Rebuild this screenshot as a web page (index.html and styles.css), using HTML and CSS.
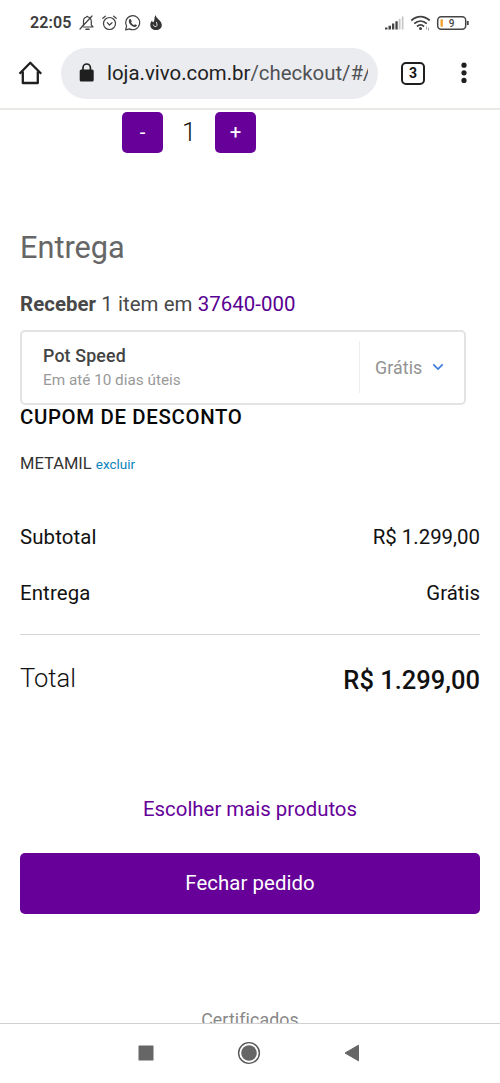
FILE: index.html
```html
<!DOCTYPE html>
<html lang="pt-BR">
<head>
<meta charset="utf-8">
<title>Checkout</title>
<link rel="stylesheet" href="styles.css">
</head>
<body>
<header class="status">
  <span class="clock">22:05</span>
  <svg class="status-left" width="86" height="20" viewBox="0 0 86 20" fill="none" stroke="#404040" stroke-width="1.200" stroke-linecap="round" stroke-linejoin="round">
    <path d="M4 13.500 L5.500 12 V8.500 C5.500 6 6.500 4.300 8.500 4 Q9.300 2.500 10 4 C12.500 4.500 13.300 6 13.300 8.500 V12 L15 14 H5.500 M14 3 L2 16"/>
    <path d="M8 16.300 H11" stroke-width="1.600"/>
    <circle cx="31.500" cy="10.500" r="6"/>
    <path d="M29.300 9.700 L31.500 12 L34 9.700 M24.800 5.300 L27.300 3.200 M38.200 5.300 L35.700 3.200"/>
    <path d="M47.600 16.800 L48.600 13.200 A7 7 0 1 1 51.400 15.900 Z"/>
    <path d="M51.500 6.300 L52.700 6 L53.800 8.400 L53 9.300 Q54 11.300 56 12.200 L57 11.200 L59 12.300 Q58.500 14 56.800 13.900 C53.500 13.600 50.700 10.600 50.800 8 Q50.900 6.800 51.500 6.300Z" fill="#404040" stroke="none"/>
    <path d="M77.500 2 C78 5.500 83.800 7.500 83.800 12 C83.800 15.500 81.300 17 78 17 C74.700 17 72.300 15 72.300 12 C72.300 9.500 73.200 8.500 74.200 7.500 C74.200 8.700 74.500 9.200 75.300 9.200 C77 8 76 4.500 77.500 2Z" fill="#333" stroke="none"/>
    <path d="M78.500 9.500 C78.800 11.500 79.700 12.300 78.300 13.400 C76.800 14 75.500 13 75.300 12" stroke="#fff" stroke-width=".9"/>
  </svg>
  <svg class="status-right" width="88" height="20" viewBox="0 0 88 20">
    <path d="M1 14.500 H3.500 V16.500 H1Z M4.500 12.700 H7 V16.500 H4.500Z M8 10.500 H10.300 V16.500 H8Z M11.400 8.300 H13.700 V16.500 H11.400Z" fill="#454545"/>
    <path d="M14.700 5.800 H16.500 V16.500 H14.700Z M17.800 3.500 H19.500 V16.500 H17.800Z" fill="#c6c6c6"/>
    <g fill="none" stroke="#404040" stroke-width="1.800"><path d="M27.300 7.500 C33 2.500 40 2.500 45.700 7.500 M30.200 10.700 C34 7.300 39 7.300 42.800 10.700 M33 13.500 C35.200 11.500 37.800 11.500 40 13.500"/></g>
    <circle cx="36.500" cy="15.500" r="1.500" fill="#404040"/>
    <path d="M42.500 13.500 V16.500 M44.500 14.500 V17.500" stroke="#aaa"/>
    <rect x="53.700" y="3.700" width="28" height="12.600" rx="3.500" fill="none" stroke="#444" stroke-width="1.500"/>
    <rect x="56.500" y="6.200" width="2.400" height="7.600" rx=".5" fill="#f0a233"/>
    <path d="M83.800 8 V12" stroke="#444" stroke-width="1.800"/>
    <text x="67.500" y="13.700" text-anchor="middle" class="battery-text">9</text>
  </svg>
</header>
<div class="toolbar">
  <svg class="home" width="26" height="26" viewBox="0 0 26 26" fill="none" stroke="#1f1f1f" stroke-width="2.300" stroke-linejoin="round"><path d="M1.500 13.800 L12.300 2.800 L23.200 13.800 M4.800 11.500 V23 H19.800 V11.500"/></svg>
  <div class="address">
    <svg width="16" height="20" viewBox="0 0 16 20"><rect x=".7" y="6.500" width="14" height="12" rx="1.500" fill="#1f1f1f"/><path d="M4 7.500 V4.700 A3.700 3.700 0 0 1 11.400 4.700 V7.500" fill="none" stroke="#1f1f1f" stroke-width="1.700"/></svg>
    <div class="url">loja.vivo.com.br<span class="path">/checkout/#/</span></div>
  </div>
  <div class="tabs">3</div>
  <svg class="more" width="6" height="22" viewBox="0 0 6 22" fill="#1f1f1f"><circle cx="3" cy="3.200" r="2.600"/><circle cx="3" cy="10.800" r="2.600"/><circle cx="3" cy="18.400" r="2.600"/></svg>
</div>
<main class="page">
  <div class="quantity"><button class="step">-</button><span class="amount">1</span><button class="step">+</button></div>
  <h2 class="heading">Entrega</h2>
  <p class="receive"><b>Receber</b> 1 item em <a>37640-000</a></p>
  <section class="shipping">
    <div class="carrier"><div class="carrier-name">Pot Speed</div><div class="carrier-time">Em até 10 dias úteis</div></div>
    <div class="price"><span>Grátis</span><svg width="12" height="8" viewBox="0 0 12 8" fill="none" stroke="#3b7ddd" stroke-width="1.700"><path d="M1.300 1.300 L6 6 L10.700 1.300"/></svg></div>
  </section>
  <h3 class="coupon-title">CUPOM DE DESCONTO</h3>
  <p class="coupon">METAMIL <a>excluir</a></p>
  <div class="row"><span class="label">Subtotal</span><span>R$ 1.299,00</span></div>
  <div class="row"><span class="label">Entrega</span><span>Grátis</span></div>
  <div class="total"><span class="total-label">Total</span><strong>R$ 1.299,00</strong></div>
  <a class="more-products">Escolher mais produtos</a>
  <button class="submit">Fechar pedido</button>
  <p class="certs">Certificados</p>
</main>
<nav class="system-nav">
  <svg width="16" height="16" viewBox="0 0 16 16"><rect x=".5" y=".5" width="15" height="15" rx=".5" fill="#666"/></svg>
  <svg width="24" height="24" viewBox="0 0 24 24"><circle cx="12" cy="12" r="10.400" fill="none" stroke="#555" stroke-width="1.400"/><circle cx="12" cy="12" r="7.800" fill="#666"/></svg>
  <svg width="16" height="18" viewBox="0 0 16 18"><path d="M1 9 L14.500 1.200 V16.800Z" fill="#666" stroke="#666" stroke-linejoin="round"/></svg>
</nav>
</body>
</html>
```
FILE: styles.css
```css
* { box-sizing: border-box; }
body { margin: 0; width: 500px; height: 1083px; display: flex; flex-direction: column; overflow: hidden; background: #fff; color: #111; font-family: Roboto, sans-serif; font-size: 20.4px; white-space: nowrap; }
h2, h3, p { margin: 0; font-weight: 400; }
button { border: 0; padding: 0; font-family: inherit; font-weight: 400; color: #fff; background: #609; }
svg { display: block; flex: none; }
.status { display: flex; flex: none; align-items: center; height: 46px; padding: 0 28px 0 30px; }
.clock { width: 48px; font-size: 16px; font-weight: 600; letter-spacing: .1px; color: #3c3c3c; line-height: 46px; }
.status-right { margin-left: auto; }
.battery-text { font: 500 10px Roboto, sans-serif; fill: #444; }
.toolbar { display: flex; flex: none; align-items: center; height: 64px; padding: 0 33px 8px 18px; border-bottom: 2px solid #e8e8e5; }
.address { display: flex; align-items: center; width: 317px; height: 51px; margin-left: 17px; padding: 0 9px 0 18px; border-radius: 26px; background: #ebecf0; }
.url { width: 261px; margin-left: 12px; overflow: hidden; font-size: 20.4px; line-height: 30px; color: #222; }
.path { color: #505154; }
.tabs { width: 24px; height: 23px; margin-left: 23px; border: 2.4px solid #1f1f1f; border-radius: 5px; font-size: 14px; font-weight: 700; line-height: 19px; text-align: center; }
.more { margin-left: auto; }
.page { flex: none; height: 913px; padding: 2px 20px 0; overflow: hidden; }
.quantity { display: flex; align-items: center; height: 41px; margin-left: 102px; }
.step { width: 41px; height: 41px; border-radius: 5px; font-size: 20.4px; line-height: 41px; }
.amount { width: 52px; font-size: 25.5px; font-weight: 300; line-height: 43px; text-align: center; }
.heading { margin-top: 75px; font-size: 30.7px; line-height: 40px; color: #666; }
.receive { margin-top: 21px; line-height: 30px; letter-spacing: .07px; color: #484848; }
.receive a { color: #580091; }
.shipping { display: flex; width: 446px; height: 75px; margin-top: 11px; padding: 9px 0; border: 2px solid #e3e3e3; border-radius: 5px; }
.carrier { width: 338px; height: 52px; padding: 2px 0 0 21px; border-right: 1px solid #eee; line-height: 25px; }
.carrier-name { font-size: 17.8px; font-weight: 500; letter-spacing: .15px; color: #444; }
.carrier-time { font-size: 15.3px; color: #999; }
.price { display: flex; align-items: center; gap: 10px; height: 52px; padding-left: 15px; font-size: 17.8px; letter-spacing: .1px; color: #929292; }
.coupon-title { margin-top: -3px; font-size: 20.4px; font-weight: 500; line-height: 30px; letter-spacing: .65px; color: #080808; }
.coupon { margin-top: 17px; font-size: 16.5px; line-height: 30px; color: #333; }
.coupon a { font-size: 13.5px; color: #0d83bd; }
.row { display: flex; justify-content: space-between; height: 56px; line-height: 30px; }
.label { letter-spacing: .13px; }
.coupon + .row { margin-top: 43px; }
.total { display: flex; justify-content: space-between; border-top: 1px solid #d8d8d8; font-size: 25.5px; line-height: 40px; }
.total-label { padding-top: 23px; font-weight: 300; }
.total strong { padding-top: 25px; font-weight: 500; }
.more-products { display: block; margin-top: 94px; line-height: 30px; text-align: center; color: #609; }
.submit { display: block; width: 100%; height: 61px; margin-top: 29px; padding-bottom: 2px; border-radius: 5px; font-size: 20.4px; letter-spacing: .06px; }
.certs { margin-top: 91px; font-size: 17.8px; line-height: 30px; letter-spacing: .1px; text-align: center; color: #888; }
.system-nav { display: flex; flex: none; align-items: center; justify-content: space-between; height: 60px; padding: 0 140px 1px 138px; border-top: 1px solid #d0d0d0; }
```
